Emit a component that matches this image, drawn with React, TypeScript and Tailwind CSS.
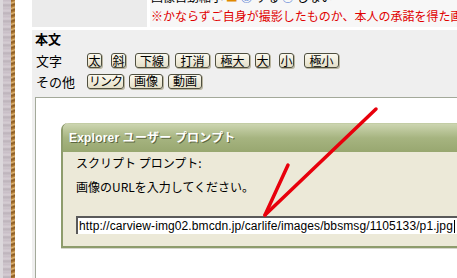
const font = "font-['Noto_Sans_CJK_JP',sans-serif]";

// toolbar buttons: label, width and left margin, measured from the shot
const textButtons = [
  { label: "太", cls: "w-[15px] ml-0" },
  { label: "斜", cls: "w-[15px] ml-[9px]" },
  { label: "下線", cls: "w-[34px] ml-[9px]" },
  { label: "打消", cls: "w-[35px] ml-[6px]" },
  { label: "極大", cls: "w-[35px] ml-[5px]" },
  { label: "大", cls: "w-[15px] ml-[5px]" },
  { label: "小", cls: "w-[15px] ml-[9px]" },
  { label: "極小", cls: "w-[35px] ml-[10px]" },
];

const otherButtons = [
  { label: "リンク", cls: "w-[37px] ml-0 tracking-[-1px]" },
  { label: "画像", cls: "w-[34px] ml-[5px]" },
  { label: "動画", cls: "w-[34px] ml-[5px]" },
];

const ToolButton = ({ label, cls }: { label: string; cls: string }) => (
  <div
    className={`${cls} h-[15px] flex items-center justify-center whitespace-nowrap rounded-[3px] border border-[#4f4f3f] bg-gradient-to-b from-[#fbf9ef] to-[#e4dfc8] shadow-[1px_1px_0_#b9b5a0] text-[12px] leading-none text-black`}
  >
    {label}
  </div>
);

const LeftStrip = () => (
  <div className="flex w-[32px] shrink-0 h-full">
    <div className="w-[3px] bg-[#dcd8dc]" />
    <div className="w-[8px] bg-[repeating-linear-gradient(180deg,#c7bcc5_0px,#d6ced4_3px,#bcb2ba_5px,#cfc7cd_8px)]" />
    <div className="w-[4px] bg-[repeating-linear-gradient(160deg,#8a5a22_0px,#b7843f_2px,#e1b878_3px,#8a5a22_5px)]" />
    <div className="flex-1 bg-white" />
  </div>
);

const Dialog = () => (
  <div className="absolute left-[61px] top-[123px] w-[420px] h-[125px] flex flex-col rounded-t-[7px] border-l-[2px] border-b-[2px] border-[#8e9c6c] bg-[#ece9d8] shadow-[0_1px_0_#d6d6cc]">
    <div className="h-[29px] shrink-0 rounded-tl-[6px] bg-gradient-to-b from-[#ccd5b0] via-[#a6b480] to-[#98a770] flex items-center pl-[6px] border-t border-[#c3cda5]">
      <span className="text-[12px] font-bold text-white [text-shadow:1px_1px_0_#5c6640] font-['Liberation_Sans','Noto_Sans_CJK_JP',sans-serif] tracking-[0.2px]">
        Explorer ユーザー プロンプト
      </span>
    </div>
    <div className="flex-1 pl-[13px] pt-[1px] text-[12px] text-black">
      <div className="h-[20px] leading-[20px]">スクリプト プロンプト:</div>
      <div className="h-[20px] mt-[4px] leading-[20px]">画像のURLを入力してください。</div>
      <div className="mt-[19px] h-[18px] w-[420px] bg-white border-t-2 border-l-2 border-t-[#5a5a5a] border-l-[#5a5a5a] flex items-center pl-[1px]">
        <span className="text-[12px] leading-none tracking-[0.1px] whitespace-nowrap font-['Liberation_Sans',sans-serif]">
          http://carview-img02.bmcdn.jp/carlife/images/bbsmsg/1105133/p1.jpg
        </span>
        <span className="ml-[1px] w-[1px] h-[13px] bg-black shrink-0" />
      </div>
    </div>
  </div>
);

const Arrow = () => (
  <svg className="absolute left-0 top-0 pointer-events-none" width="457" height="278" viewBox="0 0 457 278">
    <g stroke="#e8000c" strokeWidth="3.5" strokeLinecap="round" fill="none">
      <line x1="376" y1="109" x2="265" y2="215" />
      <line x1="288" y1="165" x2="265" y2="215" />
    </g>
  </svg>
);

export default function App() {
  return (
    <div className={`relative w-[457px] h-[278px] overflow-hidden bg-white flex ${font}`}>
      <LeftStrip />
      <div className="flex-1 flex flex-col">
        {/* top row: clipped form row with the red notice */}
        <div className="h-[27px] flex shrink-0">
          <div className="w-[115px] bg-[#ebebeb]" />
          <div className="w-[3px] bg-white" />
          <div className="flex-1 bg-[#f7f7f7] relative overflow-hidden text-[12px] whitespace-nowrap pl-[1px]">
            <div className="h-[14px] -mt-[10px] leading-[14px] text-black">画像自動縮小 <span className="text-[#e08a00]">■</span> <span className="text-[#3a6fd0]">◎</span> する <span className="text-[#3a6fd0]">○</span> しない</div>
            <div className="mt-[5px] leading-[14px] text-[#e00000]">※かならずご自身が撮影したものか、本人の承諾を得た画像</div>
          </div>
        </div>
        <div className="h-[3px] bg-white shrink-0" />
        <div className="flex-1 bg-[#efefef] flex flex-col">
          <div className="h-[18px] pl-[3px] flex items-center text-[13px] font-bold text-black">本文</div>
          <div className="mt-[5px] h-[15px] flex items-center">
            <div className="w-[55px] pl-[4px] text-[13px] text-black leading-none">文字</div>
            {textButtons.map((b) => (
              <ToolButton key={b.label} label={b.label} cls={b.cls} />
            ))}
          </div>
          <div className="mt-[5px] h-[16px] flex items-center">
            <div className="w-[55px] pl-[4px] text-[13px] text-black leading-none">その他</div>
            {otherButtons.map((b) => (
              <ToolButton key={b.label} label={b.label} cls={b.cls} />
            ))}
          </div>
          <div className="mt-[8px] ml-[3px] flex-1 bg-white border-t border-l border-[#a3a99a]" />
        </div>
      </div>
      <Dialog />
      <Arrow />
    </div>
  );
}
